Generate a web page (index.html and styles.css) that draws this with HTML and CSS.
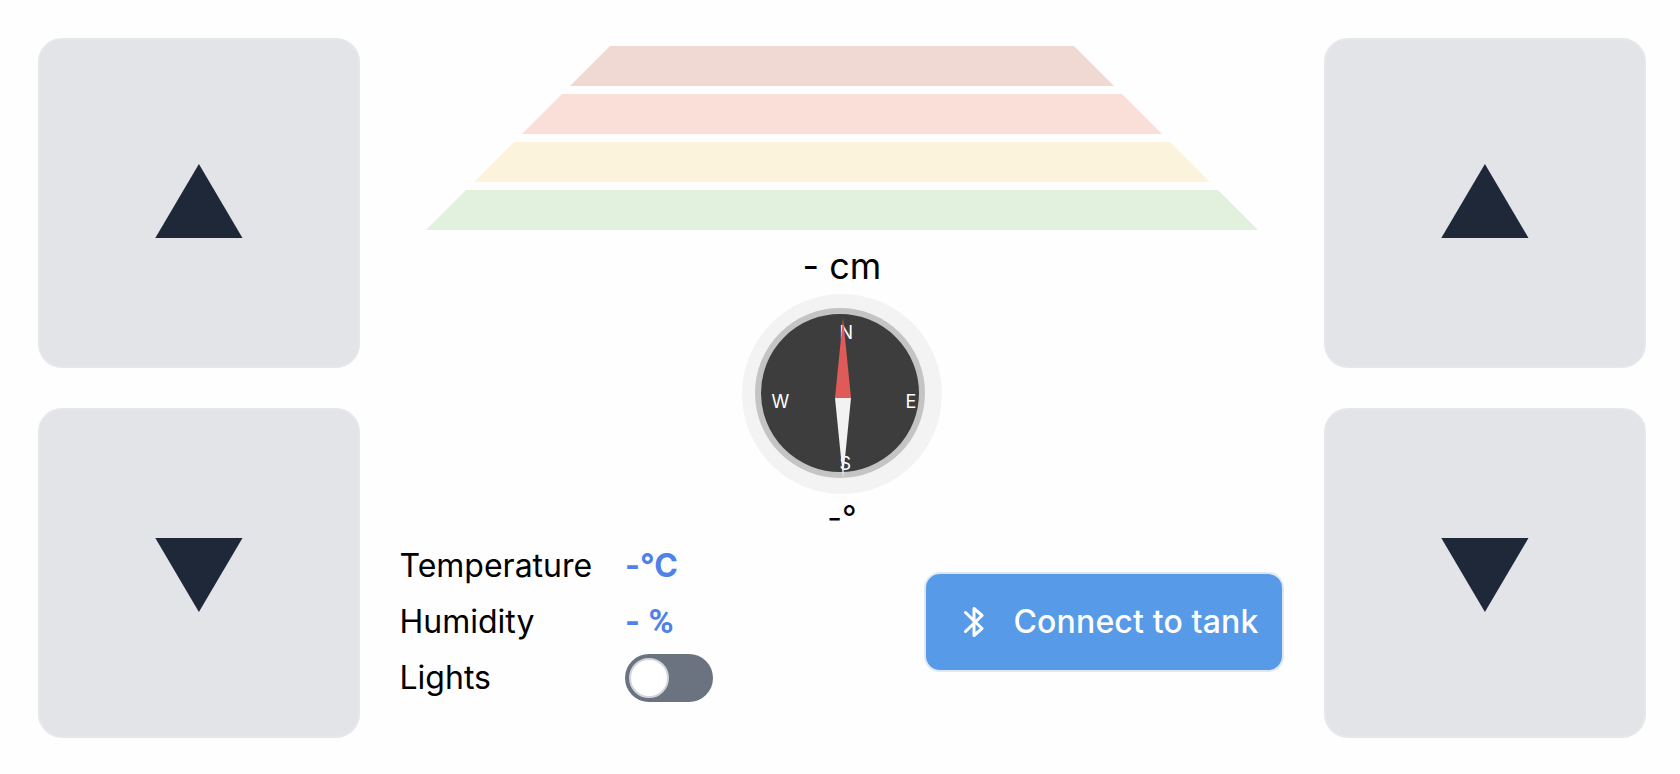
FILE: index.html
```html
<!DOCTYPE html>
<html lang="en">
<head>
<meta charset="utf-8">
<title>Tank control</title>
<link rel="stylesheet" href="styles.css">
</head>
<body>
<main class="app">
  <section class="track">
    <button class="pad" aria-label="Left forward"><svg class="arrow arrow-up" viewBox="0 0 88 74"><path d="M43.9 0L87.5 74H.3z"/></svg></button>
    <button class="pad" aria-label="Left backward"><svg class="arrow arrow-down" viewBox="0 0 88 74"><path d="M.3 0h87.2L43.9 74z"/></svg></button>
  </section>
  <section class="center">
    <div class="radar">
      <div class="bar bar-1"></div>
      <div class="bar bar-2"></div>
      <div class="bar bar-3"></div>
      <div class="bar bar-4"></div>
    </div>
    <div class="distance">- cm</div>
    <div class="compass">
      <div class="dial"></div>
      <span class="mark mark-n">N</span>
      <span class="mark mark-e">E</span>
      <span class="mark mark-s">S</span>
      <span class="mark mark-w">W</span>
      <svg class="needle" viewBox="0 0 16 160"><path fill="#df5b57" d="M8 0l8 80H0z"/><path fill="#f2f2f2" d="M0 80h16l-8 80z"/></svg>
    </div>
    <div class="heading">-°</div>
    <div class="bottom">
      <div class="stats">
        <span class="label">Temperature</span><span class="value">-°C</span>
        <span class="label">Humidity</span><span class="value">- <span class="percent">%</span></span>
        <span class="label">Lights</span><span class="toggle"><span class="knob"></span></span>
      </div>
      <button class="connect">
        <svg class="bluetooth" viewBox="0 0 20 30"><path d="M1.5 5.5L18 21.5L10 28.5V1.5L18 8.5L1.5 24.5"/></svg>
        <span class="connect-text">Connect to tank</span>
      </button>
    </div>
  </section>
  <section class="track">
    <button class="pad" aria-label="Right forward"><svg class="arrow arrow-up" viewBox="0 0 88 74"><path d="M43.9 0L87.5 74H.3z"/></svg></button>
    <button class="pad" aria-label="Right backward"><svg class="arrow arrow-down" viewBox="0 0 88 74"><path d="M.3 0h87.2L43.9 74z"/></svg></button>
  </section>
</main>
</body>
</html>
```
FILE: styles.css
```css
* { box-sizing: border-box; }
body { margin: 0; background: #fefefe; font-family: Inter, sans-serif; color: #000; }
button { font: inherit; padding: 0; }
.app { display: grid; grid-template-columns: 322px 884px 322px; column-gap: 40px; height: 774px; padding: 38px 34px 36px 38px; }
.track { display: grid; grid-template-rows: 330px 330px; row-gap: 40px; }
.pad { display: flex; justify-content: center; align-items: center; background: #e2e4e8; border: 2px solid #e5e7eb; border-radius: 24px; }
.arrow { width: 88px; height: 74px; fill: #1f2839; }
.arrow-up { margin-bottom: 4px; }
.arrow-down { margin-top: 4px; }
.center { display: flex; flex-direction: column; align-items: center; padding-top: 8px; }
.radar { display: flex; flex-direction: column; align-items: center; gap: 8px; }
.bar { height: 40px; clip-path: polygon(40px 0, calc(100% - 40px) 0, 100% 100%, 0 100%); }
.bar-1 { width: 544px; background: #f0d9d3; }
.bar-2 { width: 640px; background: #faded8; }
.bar-3 { width: 736px; background: #fcf3dc; }
.bar-4 { width: 832px; background: #e2f1dd; }
.distance { margin-top: 16px; height: 48px; font-size: 36px; line-height: 40px; white-space: pre; }
.compass { position: relative; flex: none; width: 200px; height: 200px; border-radius: 50%; background: #f3f3f3; }
.dial { position: absolute; left: 13px; top: 14px; width: 170px; height: 170px; border: 6px solid #c4c4c4; border-radius: 50%; background: #3d3d3d; }
.mark { position: absolute; color: #fff; font-size: 18px; line-height: 22px; }
.mark-n { left: 97.5px; top: 28px; }
.mark-e { left: 163.5px; top: 97px; }
.mark-s { left: 97.5px; top: 159px; }
.mark-w { left: 29.5px; top: 97px; }
.needle { position: absolute; left: 93px; top: 24px; width: 16px; height: 160px; }
.heading { margin-top: 6px; height: 38px; font-size: 32px; line-height: 36px; font-weight: 400; }
.bottom { display: flex; justify-content: space-between; align-items: center; align-self: stretch; height: 168px; }
.stats { display: grid; grid-template-columns: 225px auto; grid-auto-rows: 56px; align-items: center; font-size: 32px; line-height: 48px; }
.label { margin-left: -0.5px; }
.value { color: #4f81e9; font-weight: 700; }
.percent { margin-left: 1px; font-family: Roboto, sans-serif; font-size: 34px; line-height: 1; }
.toggle { display: flex; align-items: center; width: 88px; height: 48px; padding: 4px; border-radius: 24px; background: #6b7280; }
.knob { width: 40px; height: 40px; border: 2px solid #d1d5db; border-radius: 50%; background: #fff; }
.connect { display: flex; align-items: center; width: 360px; height: 100px; padding-left: 38px; gap: 29.5px; border: 2px solid #dfe7f6; border-radius: 16px; background: #579ae8; color: #fff; font-size: 32px; font-weight: 500; white-space: nowrap; }
.connect-text { padding-bottom: 2px; letter-spacing: 0.15px; }
.bluetooth { flex: none; width: 20px; height: 30px; fill: none; stroke: #fff; stroke-width: 3; stroke-linecap: round; stroke-linejoin: round; }
```
